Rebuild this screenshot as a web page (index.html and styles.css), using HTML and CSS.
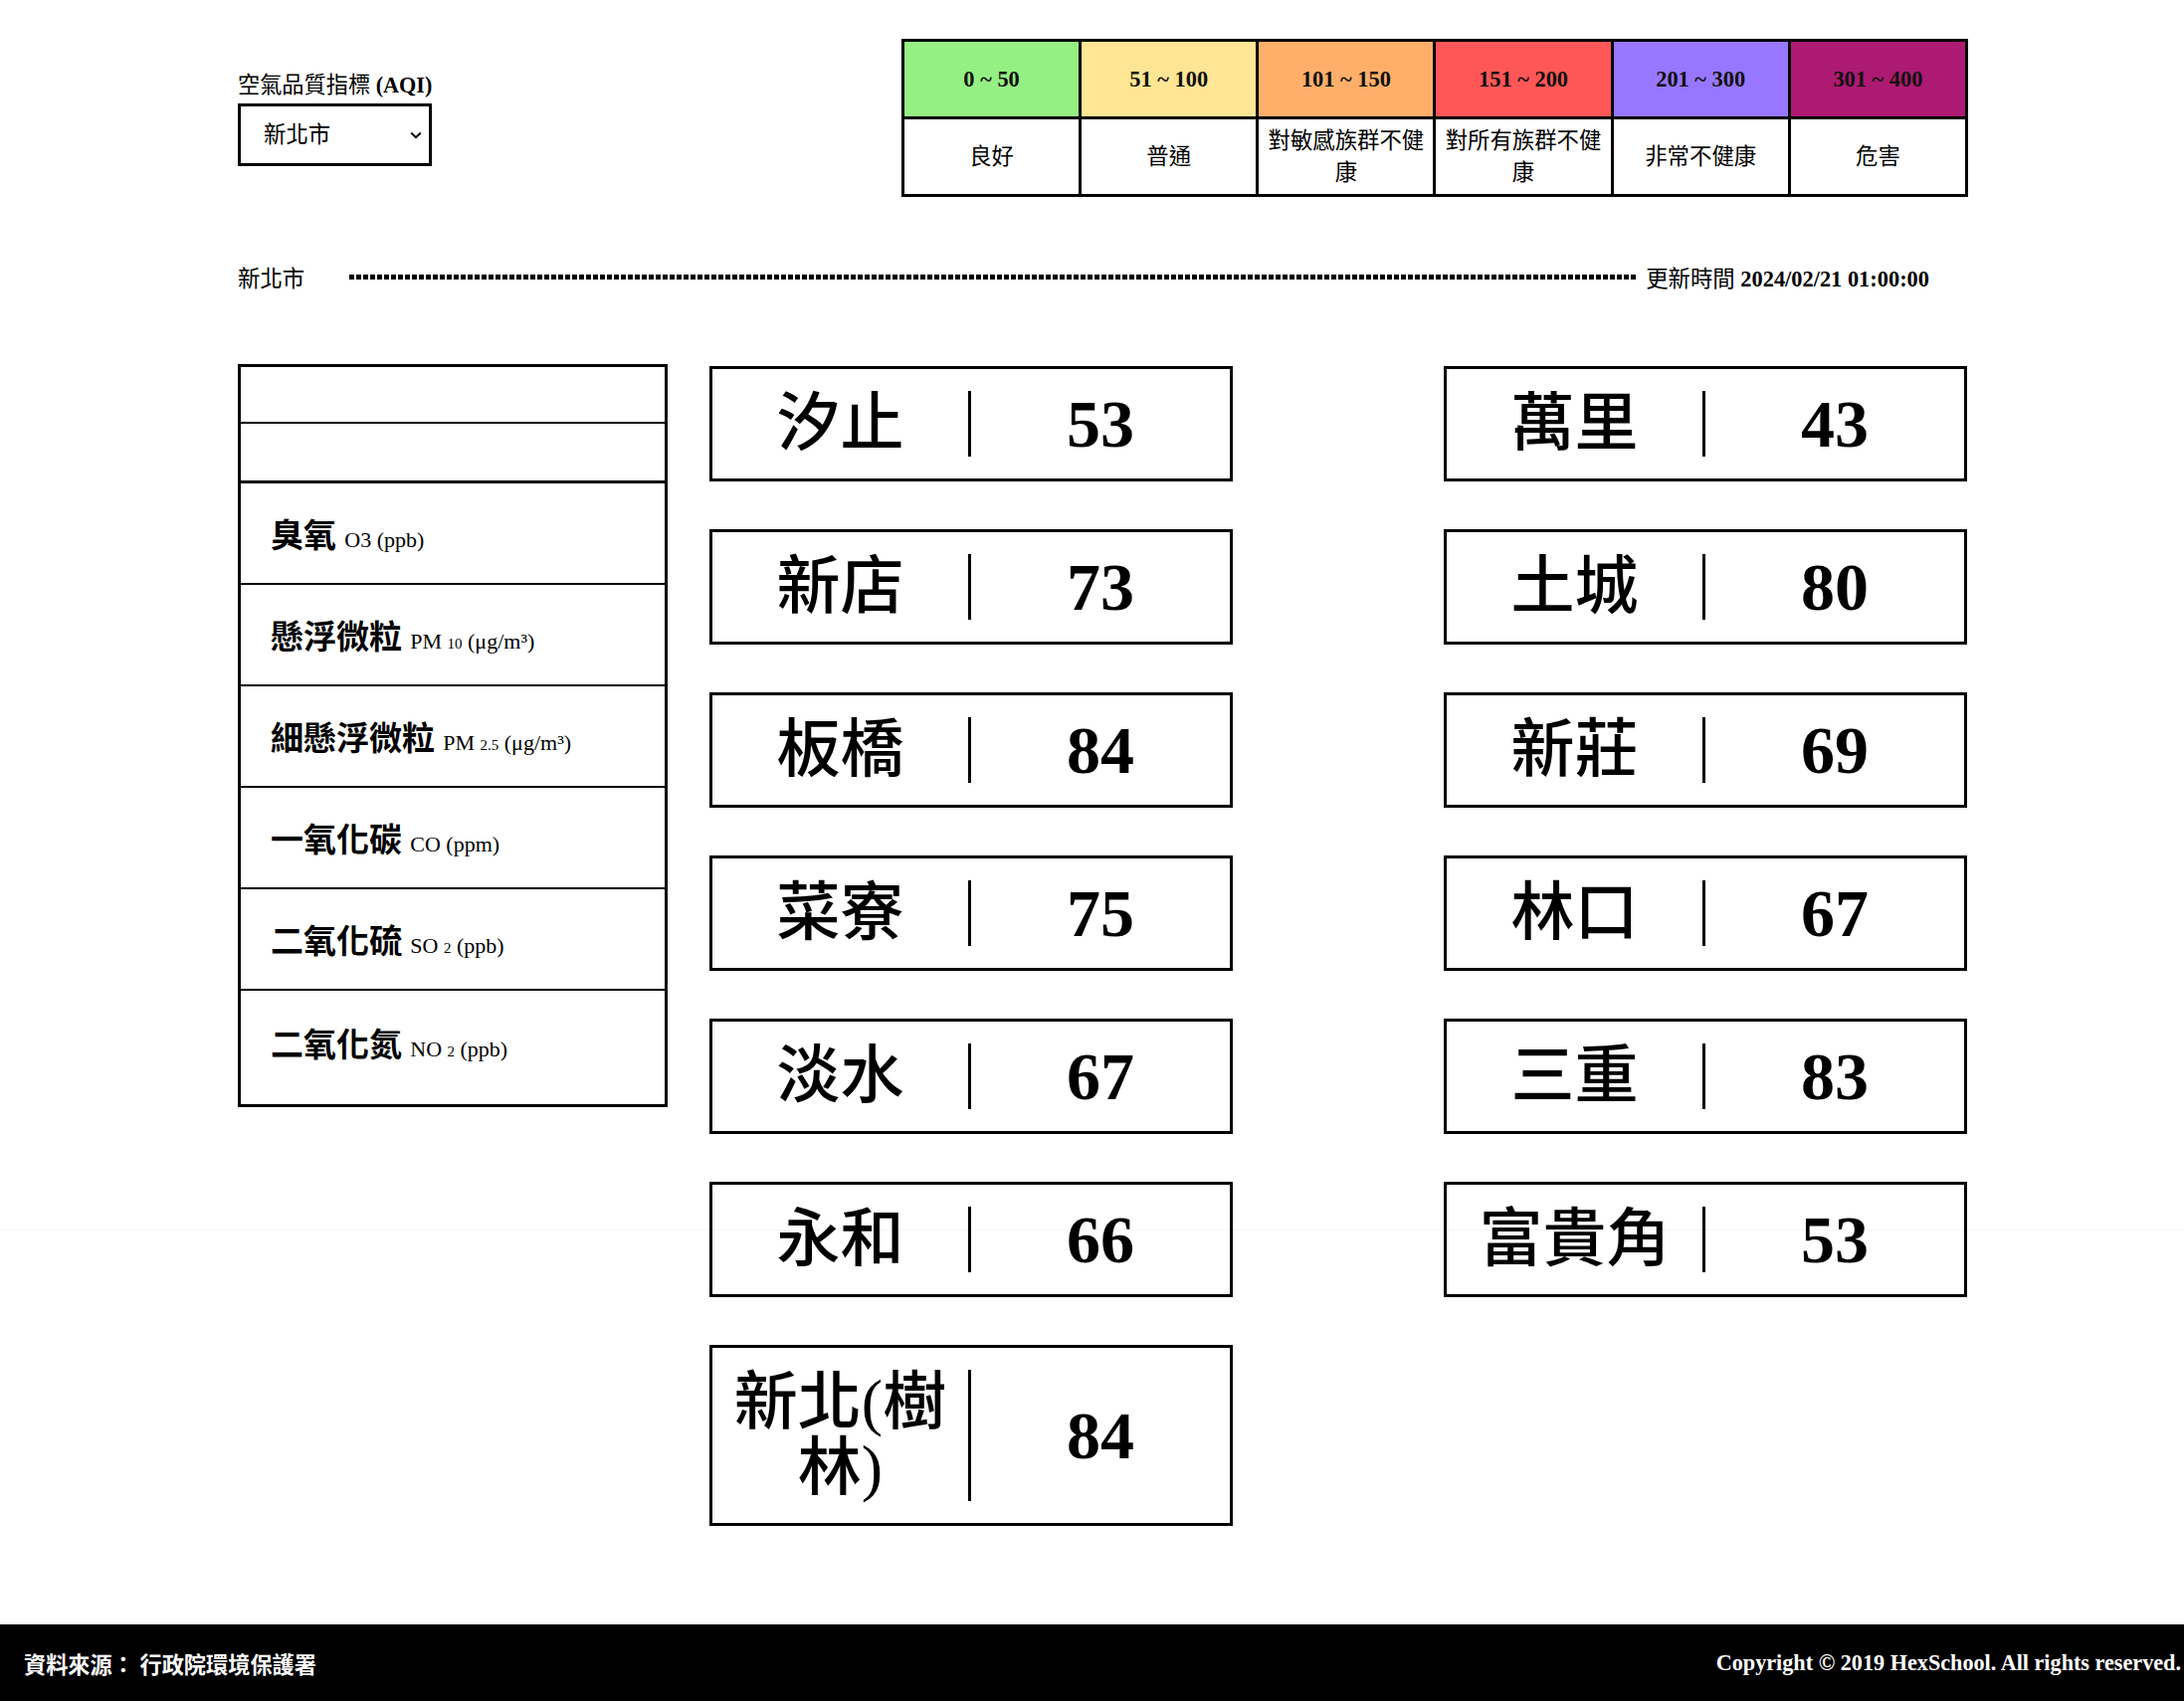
FILE: index.html
```html
<!DOCTYPE html>
<html lang="zh-Hant">
<head>
<meta charset="utf-8">
<title>空氣品質指標 (AQI)</title>
<link rel="stylesheet" href="styles.css">
</head>
<body>
<main class="page">
  <header class="top">
    <div class="picker">
      <label class="picker-label" for="city">空氣品質指標 <b>(AQI)</b></label>
      <div class="select-wrap">
        <select id="city" class="select"><option>新北市</option></select>
        <svg class="chevron" viewBox="0 0 12 8" aria-hidden="true"><path d="M1.2 1.5 L6 6.2 L10.8 1.5" /></svg>
      </div>
    </div>
    <table class="legend">
      <tr>
        <th class="lv1">0 ~ 50</th>
        <th class="lv2">51 ~ 100</th>
        <th class="lv3">101 ~ 150</th>
        <th class="lv4">151 ~ 200</th>
        <th class="lv5">201 ~ 300</th>
        <th class="lv6">301 ~ 400</th>
      </tr>
      <tr>
        <td>良好</td>
        <td>普通</td>
        <td>對敏感族群不健康</td>
        <td>對所有族群不健康</td>
        <td>非常不健康</td>
        <td>危害</td>
      </tr>
    </table>
  </header>

  <div class="status">
    <span class="status-city">新北市</span>
    <span class="status-dots"></span>
    <span class="status-time">更新時間 <b>2024/02/21 01:00:00</b></span>
  </div>

  <section class="content">
    <table class="pollutants">
      <thead>
        <tr><th class="head-a"></th></tr>
        <tr><th class="head-b"></th></tr>
      </thead>
      <tbody>
        <tr><td>臭氧 <span class="unit">O3 (ppb)</span></td></tr>
        <tr><td>懸浮微粒 <span class="unit">PM <small>10</small> (μg/m³)</span></td></tr>
        <tr><td>細懸浮微粒 <span class="unit">PM <small>2.5</small> (μg/m³)</span></td></tr>
        <tr><td>一氧化碳 <span class="unit">CO (ppm)</span></td></tr>
        <tr><td>二氧化硫 <span class="unit">SO <small>2</small> (ppb)</span></td></tr>
        <tr class="last"><td>二氧化氮 <span class="unit">NO <small>2</small> (ppb)</span></td></tr>
      </tbody>
    </table>

    <div class="stations">
      <div class="station"><div class="station-name">汐止</div><div class="station-aqi">53</div></div>
      <div class="station"><div class="station-name">萬里</div><div class="station-aqi">43</div></div>
      <div class="station"><div class="station-name">新店</div><div class="station-aqi">73</div></div>
      <div class="station"><div class="station-name">土城</div><div class="station-aqi">80</div></div>
      <div class="station"><div class="station-name">板橋</div><div class="station-aqi">84</div></div>
      <div class="station"><div class="station-name">新莊</div><div class="station-aqi">69</div></div>
      <div class="station"><div class="station-name">菜寮</div><div class="station-aqi">75</div></div>
      <div class="station"><div class="station-name">林口</div><div class="station-aqi">67</div></div>
      <div class="station"><div class="station-name">淡水</div><div class="station-aqi">67</div></div>
      <div class="station"><div class="station-name">三重</div><div class="station-aqi">83</div></div>
      <div class="station"><div class="station-name">永和</div><div class="station-aqi">66</div></div>
      <div class="station"><div class="station-name">富貴角</div><div class="station-aqi">53</div></div>
      <div class="station"><div class="station-name">新北(樹林)</div><div class="station-aqi">84</div></div>
    </div>
  </section>
</main>

<footer class="footer">
  <span class="footer-source">資料來源： 行政院環境保護署</span>
  <span class="footer-copy">Copyright © 2019 HexSchool. All rights reserved.</span>
</footer>
<div class="fold-line"></div>
</body>
</html>
```

FILE: styles.css
```css
html,
body {
  margin: 0;
  padding: 0;
}

body {
  font-family: "Liberation Serif", "Noto Sans CJK TC", serif;
  color: #000;
  background: #fff;
  min-height: 100vh;
  display: flex;
  flex-direction: column;
}

.page {
  flex: 1;
  width: 1739px;
  margin-left: 239px;
}

/* ---------- top ---------- */
.top {
  display: flex;
  justify-content: space-between;
  align-items: flex-start;
  padding-top: 39px;
}

.picker {
  padding-top: 33px;
}

.picker-label {
  display: block;
  font-size: 22.2px;
  line-height: 28px;
  white-space: nowrap;
}

.select-wrap {
  position: relative;
  width: 195px;
  height: 63px;
  margin-top: 4px;
}

.select {
  -webkit-appearance: none;
  appearance: none;
  display: block;
  width: 100%;
  height: 100%;
  box-sizing: border-box;
  border: 3px solid #000;
  border-radius: 0;
  background: #fff;
  color: #000;
  font-family: "Liberation Serif", "Noto Sans CJK TC", serif;
  font-size: 22.4px;
  padding: 0 0 0 23px;
  margin: 0;
  outline: none;
}

.chevron {
  position: absolute;
  right: 10px;
  top: 28px;
  width: 12px;
  height: 8px;
  pointer-events: none;
}

.chevron path {
  fill: none;
  stroke: #000;
  stroke-width: 2;
}

/* ---------- legend ---------- */
.legend {
  width: 1072px;
  table-layout: fixed;
  border-spacing: 0;
  border-top: 3px solid #000;
  border-left: 3px solid #000;
}

.legend th,
.legend td {
  box-sizing: border-box;
  border-right: 3px solid #000;
  border-bottom: 3px solid #000;
  text-align: center;
  vertical-align: middle;
  font-size: 22.4px;
}

.legend th {
  height: 78px;
  padding: 0;
  font-weight: 700;
  color: #111;
}

.legend td {
  height: 78px;
  padding: 0 7px;
  font-weight: 400;
  line-height: 32px;
}

.lv1 { background: #95f084; }
.lv2 { background: #ffe695; }
.lv3 { background: #ffaf6a; }
.lv4 { background: #ff5757; }
.lv5 { background: #9777ff; }
.lv6 { background: #ad1a72; }

/* ---------- status ---------- */
.status {
  display: flex;
  align-items: center;
  height: 30px;
  margin-top: 65px;
  padding-right: 39px;
  font-size: 22.4px;
}

.status-dots {
  flex: 1;
  height: 5px;
  margin: 0 9px 0 45px;
  background: repeating-linear-gradient(to right, #000 0 5px, transparent 5px 7px);
}

.status-time {
  white-space: nowrap;
}

/* ---------- content ---------- */
.content {
  display: flex;
  align-items: flex-start;
  margin-top: 73px;
}

.pollutants {
  width: 432px;
  border: 3px solid #000;
  border-spacing: 0;
  box-sizing: border-box;
  flex: none;
}

.pollutants th,
.pollutants td {
  box-sizing: border-box;
  padding: 0;
}

.pollutants .head-a {
  height: 57px;
  border-bottom: 2px solid #000;
}

.pollutants .head-b {
  height: 60px;
  border-bottom: 3px solid #000;
}

.pollutants td {
  height: 102px;
  border-bottom: 2px solid #000;
  padding-left: 30px;
  text-align: left;
  vertical-align: middle;
  font-size: 33px;
  font-weight: 700;
  white-space: nowrap;
}

.pollutants .last td {
  height: 114px;
  border-bottom: none;
  padding-bottom: 10px;
}

.unit {
  font-size: 22px;
  font-weight: 400;
}

.unit small {
  font-size: 15px;
}

.stations {
  display: grid;
  grid-template-columns: 526px 526px;
  column-gap: 212px;
  row-gap: 48px;
  margin-left: 42px;
  margin-top: 2px;
}

.station {
  display: flex;
  align-items: center;
  border: 3px solid #000;
  padding: 22px 0;
}

.station-name {
  width: 50%;
  box-sizing: border-box;
  border-right: 3px solid #000;
  text-align: center;
  font-size: 64px;
  line-height: 66px;
  font-weight: 500;
}

.station-aqi {
  flex: 1;
  text-align: center;
  font-size: 68px;
  line-height: 66px;
  font-weight: 700;
}

/* ---------- footer ---------- */
.footer {
  height: 77px;
  flex: none;
  background: #000;
  color: #fff;
  display: flex;
  justify-content: space-between;
  align-items: center;
  padding: 0 3px 0 24px;
  font-size: 22.2px;
  font-weight: 700;
}

.fold-line {
  position: absolute;
  left: 0;
  right: 0;
  top: 1236px;
  height: 1px;
  background: rgba(0, 0, 0, 0.035);
  pointer-events: none;
}
```
